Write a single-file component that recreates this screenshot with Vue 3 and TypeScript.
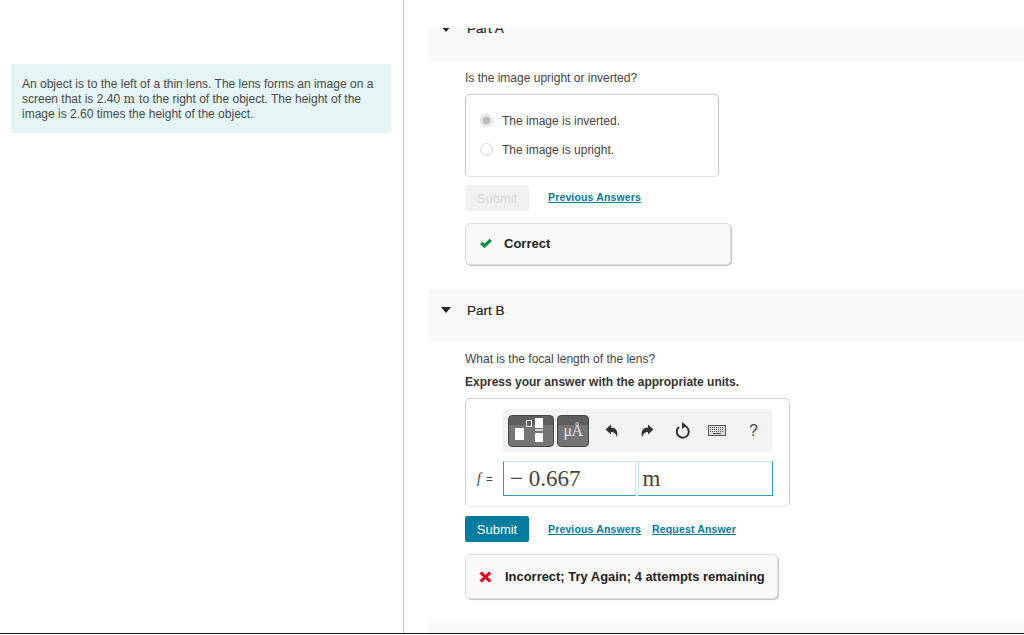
<script setup lang="ts">
const options: { label: string; checked: boolean }[] = [
  { label: 'The image is inverted.', checked: true },
  { label: 'The image is upright.', checked: false },
]
</script>

<template>
  <div class="page">
    <aside class="left">
      <div class="intro">
        An object is to the left of a thin lens. The lens forms an image on a screen that is 2.40 <span class="unit">m</span> to the right of the object. The height of the image is 2.60 times the height of the object.
      </div>
    </aside>
    <main class="right">
      <header class="part part-a">
        <svg class="caret" width="10" height="6" viewBox="0 0 10 6"><path d="M0 0h10L5 6z" fill="#222" /></svg>
        <span class="part-title clipped">Part A</span>
      </header>
      <section class="body-a">
        <p class="q">Is the image upright or inverted?</p>
        <div class="choices">
          <label v-for="o in options" :key="o.label" class="choice">
            <span class="radio" :class="{ on: o.checked }"></span>
            <span class="choice-label">{{ o.label }}</span>
          </label>
        </div>
        <div class="actions first">
          <button class="btn disabled">Submit</button>
          <a class="link">Previous Answers</a>
        </div>
        <div class="feedback ok">
          <svg width="14" height="11" viewBox="0 0 14 12"><path d="M0.500 6.500 L3 4 L5.300 6.400 L11 0.800 L13.500 3.200 L5.300 11.200 Z" fill="#0b8a43" /></svg>
          <strong>Correct</strong>
        </div>
      </section>
      <header class="part part-b">
        <svg class="caret" width="10" height="6" viewBox="0 0 10 6"><path d="M0 0h10L5 6z" fill="#222" /></svg>
        <span class="part-title">Part B</span>
      </header>
      <section class="body-b">
        <p class="q">What is the focal length of the lens?</p>
        <p class="hint">Express your answer with the appropriate units.</p>
        <div class="answer">
          <div class="toolbar">
            <div class="tool tool-frac">
              <svg width="46" height="32" viewBox="0 0 46 32">
                <rect x="7" y="13" width="9" height="12" fill="#fff" />
                <rect x="18.500" y="5.500" width="5" height="6" fill="none" stroke="#e8e8e8" stroke-width="1" />
                <rect x="27" y="3" width="8" height="10" fill="#fff" />
                <rect x="27" y="14" width="8" height="2" fill="#ccc" />
                <rect x="27" y="18" width="8" height="9" fill="#fff" />
              </svg>
            </div>
            <div class="tool tool-mu"><span class="mu">μÅ</span></div>
            <div class="icons">
              <svg width="14" height="14" viewBox="0 0 14 14"><path d="M0.500 5.500 L6 0.500 V3.500 C10.500 3.500 13.500 6.500 12 13.500 C11 9.500 9 8 6 8 V10.500 Z" fill="#333" /></svg>
              <svg width="14" height="14" viewBox="0 0 14 14"><path d="M13.500 5.500 L8 0.500 V3.500 C3.500 3.500 0.500 6.500 2 13.500 C3 9.500 5 8 8 8 V10.500 Z" fill="#333" /></svg>
              <svg width="16" height="18" viewBox="0 0 16 18"><path d="M9.500 3.900 A6 6 0 1 1 4 5" fill="none" stroke="#333" stroke-width="2" /><path d="M7 0 L11.500 3.500 L7 7 Z" fill="#333" /></svg>
              <svg class="kbd" width="18" height="11" viewBox="0 0 18 11"><rect x="0.500" y="0.500" width="17" height="10" fill="#ddd" stroke="#555" /><path d="M2 2.500h14M2 4.500h14M2 6.500h14" stroke="#555" stroke-dasharray="1 1" /><path d="M5 8.500h8" stroke="#555" /></svg>
              <span class="help">?</span>
            </div>
          </div>
          <div class="eq">
            <span class="var"><i>f</i> =</span>
            <div class="field value">− 0.667</div>
            <div class="field units">m</div>
          </div>
        </div>
        <div class="actions second">
          <button class="btn primary">Submit</button>
          <a class="link">Previous Answers</a>
          <a class="link req">Request Answer</a>
        </div>
        <div class="feedback bad">
          <svg width="13" height="12" viewBox="0 0 14 13"><path d="M0.500 2.800 L3 0.500 L7 4.200 L11 0.500 L13.500 2.800 L9.500 6.500 L13.500 10.200 L11 12.500 L7 8.800 L3 12.500 L0.500 10.200 L4.500 6.500 Z" fill="#e0001b" /></svg>
          <strong>Incorrect; Try Again; 4 attempts remaining</strong>
        </div>
      </section>
      <div class="part-next"></div>
    </main>
  </div>
</template>

<style>
html, body { margin: 0; background: #fff; }
</style>

<style scoped>
.page {
  display: flex;
  width: 1024px;
  height: 634px;
  box-sizing: border-box;
  border-bottom: 1px solid #111;
  overflow: hidden;
  font-family: "Liberation Sans", Arial, sans-serif;
  color: #444;
  font-size: 12px;
  background: #fff;
}
.left {
  width: 404px;
  flex: none;
  box-sizing: border-box;
  border-right: 1px solid #c8c8c8;
  padding: 64px 12px 0 11px;
}
.intro {
  background: #e5f5f6;
  padding: 13px 12px 11px 11px;
  height: 69px;
  box-sizing: border-box;
  line-height: 15px;
  color: #484848;
}
.unit { font-family: "DejaVu Serif", serif; font-size: 12px; margin-right: 1px; }
.right { flex: 1; padding: 28px 0 0 24px; min-width: 0; }
.part {
  display: flex;
  background: #f8f8f8;
  padding-left: 13px;
  position: relative;
}
.part-a { height: 33px; align-items: flex-start; overflow: hidden; }
.part-a .caret { position: absolute; left: 13px; top: -2px; }
.part-b { height: 52px; margin-top: 24px; align-items: center; padding-bottom: 10px; box-sizing: border-box; }
.caret { flex: none; }
.part-title { margin-left: 16px; font-size: 13.500px; color: #222; -webkit-text-stroke: 0.2px #222; }
.clipped { margin-left: 26px; margin-top: -7px; line-height: 15px; }
.body-a { padding: 10px 0 0 37px; }
.body-b { padding: 11px 0 0 37px; }
.q { margin: 0; line-height: 15px; font-size: 12px; }
.choices {
  margin-top: 8px;
  width: 254px;
  height: 83px;
  box-sizing: border-box;
  border: 1px solid #c9c9c9;
  border-radius: 5px;
  border-bottom-color: #e4e4e4;
  padding: 11px 14px;
}
.choice { display: flex; align-items: center; gap: 9px; height: 29px; font-size: 12px; line-height: 15px; }
.choice-label { margin-top: 2px; }
.radio {
  width: 13px;
  height: 13px;
  box-sizing: border-box;
  border: 1px solid #d8d8d8;
  border-radius: 50%;
  background: #fff;
  flex: none;
}
.radio.on { background: radial-gradient(circle, #bdbdbd 0 3.500px, #eee 4.500px); }
.actions { display: flex; align-items: center; margin-top: 8px; }
.btn {
  width: 64px;
  height: 26px;
  border: none;
  border-radius: 2px;
  font: 13px "Liberation Sans", Arial, sans-serif;
  padding: 0;
}
.btn.disabled { background: #f1f1f1; color: #d8d8d8; }
.btn.primary { background: #007c9f; color: #fff; }
.link {
  margin-left: 19px;
  color: #007c9f;
  font-size: 10.500px;
  font-weight: 700;
  text-decoration: underline;
  letter-spacing: 0.15px;
}
.first .link { margin-bottom: 2px; }
.link.req { margin-left: 11px; }
.feedback {
  display: flex;
  align-items: center;
  box-sizing: border-box;
  background: #f9f9f9;
  border: 1px solid #ddd;
  border-radius: 5px;
  box-shadow: 1px 1px 1px #c4c4c4;
  color: #222;
  font-size: 13px;
  padding-left: 13px;
}
.feedback strong { font-weight: 700; }
.ok { width: 266px; height: 42px; margin-top: 12px; gap: 11px; padding-bottom: 2px; }
.bad { width: 313px; height: 45px; margin-top: 12px; gap: 13px; }
.bad strong { font-size: 12.950px; }
.hint { margin: 8px 0 0; font-weight: 700; font-size: 12px; line-height: 15px; color: #333; }
.answer {
  margin-top: 8px;
  width: 325px;
  height: 109px;
  box-sizing: border-box;
  border: 1px solid #cfcfcf;
  border-radius: 5px;
  border-bottom-color: #e6e6e6;
  padding: 10px 16px 0 11px;
}
.toolbar {
  display: flex;
  align-items: center;
  margin-left: 25px;
  height: 43px;
  background: #f3f3f3;
  border-radius: 5px;
  padding-left: 6px;
  gap: 3px;
}
.tool {
  height: 32px;
  box-sizing: border-box;
  border: 1px solid #444;
  border-radius: 4px;
  background: linear-gradient(#5f5f5f 0 30%, #757575 30% 100%);
  display: flex;
  align-items: center;
  justify-content: center;
  overflow: hidden;
}
.tool-frac { width: 46px; }
.tool-frac svg { flex: none; }
.tool-mu { width: 32px; }
.mu { font-family: "Liberation Serif", serif; font-size: 16px; letter-spacing: -0.5px; color: #e4e4e4; margin-top: 1px; }
.icons { display: flex; align-items: center; margin-left: 13px; gap: 21px; color: #333; }
.kbd { margin-left: -4px; }
.help { font-size: 16px; color: #444; margin-left: 2px; }
.eq { display: flex; align-items: center; margin-top: 9px; }
.var { width: 26px; font-size: 11.500px; color: #444; }
.var i { font-family: "Liberation Serif", serif; font-size: 14px; margin-right: 2px; }
.field {
  box-sizing: border-box;
  height: 35px;
  border: 1px solid #c5e6ec;
  border-bottom-color: #2b9db3;
  font-family: "Liberation Serif", serif;
  font-size: 23px;
  color: #444;
  display: flex;
  align-items: center;
  padding-left: 6px;
}
.value { width: 134px; border-left-color: #2b9db3; }
.units { width: 135px; margin-left: 2px; border-right-color: #2b9db3; padding-left: 3px; }
.second { margin-top: 9px; }
.part-next { height: 12px; margin-top: 24px; background: #f8f8f8; }
</style>
